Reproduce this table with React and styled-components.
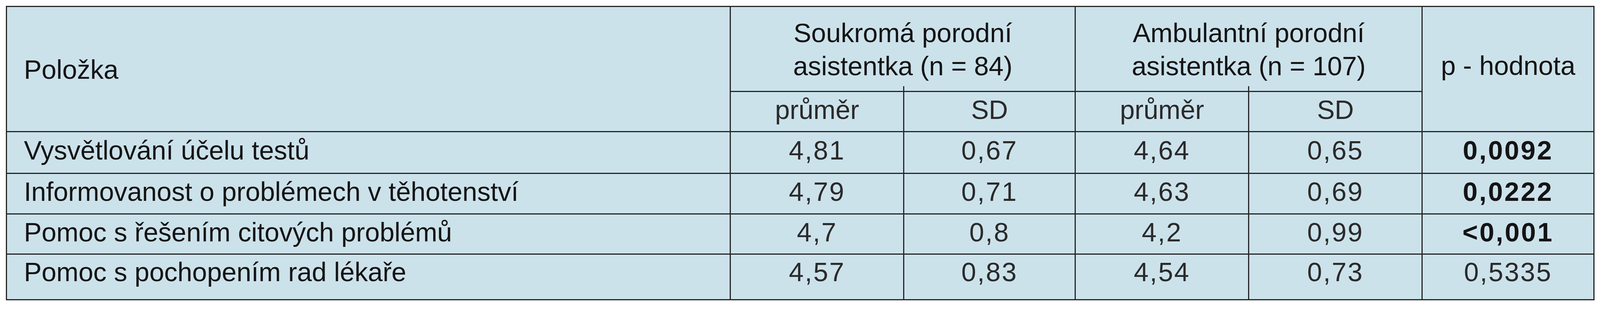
import React from 'react';
import styled, { createGlobalStyle } from 'styled-components';

const GlobalStyle = createGlobalStyle`
  html, body {
    margin: 0;
    padding: 0;
    background: #ffffff;
  }
  body {
    font-family: "Liberation Sans", Arial, sans-serif;
  }
`;

const LINE = '#262626';

const Page = styled.div`
  box-sizing: border-box;
  padding: 15.2px 0 0 15.2px;
  overflow: hidden;
`;

// the table: six columns, two header rows and four data rows
const Grid = styled.div`
  display: grid;
  grid-template-columns: 1853px 444px 439px 444px 444px 440px;
  grid-template-rows: 217.5px 103.5px 107px 103.5px 103.5px 117px;
  width: max-content;
  background: #cce2eb;
  border-left: 3px solid ${LINE};
  border-top: 3px solid ${LINE};
  color: #141414;
  font-size: 68px;
  line-height: 1.15;
`;

const Cell = styled.div`
  position: relative;
  box-sizing: border-box;
  min-width: 0;
  border-right: 3px solid ${LINE};
  border-bottom: 3px solid ${LINE};
  padding: ${props => props.$pt ?? 6}px 0 0 ${props => (props.$left ? 43 : 0)}px;
  text-align: ${props => (props.$left ? 'left' : 'center')};
  font-weight: ${props => (props.$bold ? 700 : 400)};
  color: ${props => (props.$soft ? '#2a2a2a' : '#141414')};
  letter-spacing: ${props => (props.$num ? (props.$bold ? 4 : 3) : 0)}px;
  line-height: ${props => (props.$lh ? props.$lh + 'px' : 'inherit')};
  white-space: nowrap;
  grid-column: ${props => props.$col};
  grid-row: ${props => props.$row};

  /* divider stroke poking up above the sub-header rule */
  &::before {
    content: ${props => (props.$tickUp ? '""' : 'none')};
    position: absolute;
    right: -3px;
    top: -15px;
    width: 3px;
    height: 15px;
    background: ${LINE};
  }

  /* column lines run a few pixels past the bottom rule */
  &::after {
    content: ${props => (props.$tickDown ? '""' : 'none')};
    position: absolute;
    right: -3px;
    bottom: -9px;
    width: 3px;
    height: 9px;
    background: ${LINE};
  }
`;

const rows = [
  { label: 'Vysvětlování účelu testů', vals: ['4,81', '0,67', '4,64', '0,65'], p: '0,0092', bold: true, pt: 7 },
  { label: 'Informovanost o problémech v těhotenství', vals: ['4,79', '0,71', '4,63', '0,69'], p: '0,0222', bold: true, pt: 6 },
  { label: 'Pomoc s řešením citových problémů', vals: ['4,7', '0,8', '4,2', '0,99'], p: '<0,001', bold: true, pt: 6 },
  { label: 'Pomoc s pochopením rad lékaře', vals: ['4,57', '0,83', '4,54', '0,73'], p: '0,5335', bold: false, pt: 5 },
];

export default function App() {
  return (
    <Page>
      <GlobalStyle />
      <Grid>
        <Cell $col="1" $row="1 / span 2" $left $pt={121}>Položka</Cell>
        <Cell $col="2 / span 2" $row="1" $pt={24} $lh={84.6}>
          Soukromá porodní
          <br />
          asistentka (n = 84)
        </Cell>
        <Cell $col="4 / span 2" $row="1" $pt={24} $lh={84.6}>
          Ambulantní porodní
          <br />
          asistentka (n = 107)
        </Cell>
        <Cell $col="6" $row="1 / span 2" $pt={111}>p - hodnota</Cell>

        <Cell $col="2" $row="2" $soft $tickUp>průměr</Cell>
        <Cell $col="3" $row="2" $soft>SD</Cell>
        <Cell $col="4" $row="2" $soft $tickUp>průměr</Cell>
        <Cell $col="5" $row="2" $soft>SD</Cell>

        {rows.map((r, i) => {
          const last = i === rows.length - 1;
          const row = String(i + 3);
          return (
            <React.Fragment key={r.label}>
              <Cell $col="1" $row={row} $left $pt={r.pt} $tickDown={last}>{r.label}</Cell>
              {r.vals.map((v, j) => (
                <Cell key={j} $col={String(j + 2)} $row={row} $num $soft $pt={r.pt} $tickDown={last}>
                  {v}
                </Cell>
              ))}
              <Cell $col="6" $row={row} $num $bold={r.bold} $soft={!r.bold} $pt={r.pt}>{r.p}</Cell>
            </React.Fragment>
          );
        })}
      </Grid>
    </Page>
  );
}
